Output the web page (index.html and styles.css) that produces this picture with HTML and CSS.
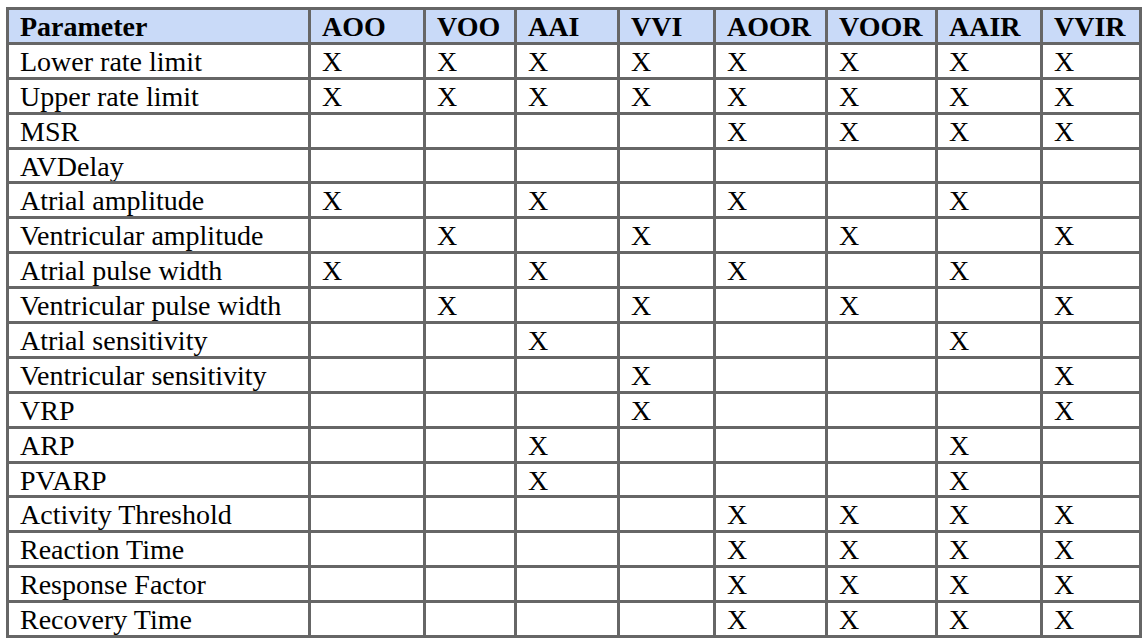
FILE: index.html
```html
<!DOCTYPE html>
<html>
<head>
<meta charset="utf-8">
<link rel="stylesheet" href="styles.css">
</head>
<body>
<table class="modes">
<colgroup>
<col class="c-param"><col class="c-aoo"><col class="c-voo"><col class="c-aai"><col class="c-vvi"><col class="c-aoor"><col class="c-voor"><col class="c-aair"><col class="c-vvir">
</colgroup>
<thead>
<tr><th>Parameter</th><th>AOO</th><th>VOO</th><th>AAI</th><th>VVI</th><th>AOOR</th><th>VOOR</th><th>AAIR</th><th>VVIR</th></tr>
</thead>
<tbody>
<tr><td>Lower rate limit</td><td>X</td><td>X</td><td>X</td><td>X</td><td>X</td><td>X</td><td>X</td><td>X</td></tr>
<tr><td>Upper rate limit</td><td>X</td><td>X</td><td>X</td><td>X</td><td>X</td><td>X</td><td>X</td><td>X</td></tr>
<tr><td>MSR</td><td></td><td></td><td></td><td></td><td>X</td><td>X</td><td>X</td><td>X</td></tr>
<tr><td>AVDelay</td><td></td><td></td><td></td><td></td><td></td><td></td><td></td><td></td></tr>
<tr><td>Atrial amplitude</td><td>X</td><td></td><td>X</td><td></td><td>X</td><td></td><td>X</td><td></td></tr>
<tr><td>Ventricular amplitude</td><td></td><td>X</td><td></td><td>X</td><td></td><td>X</td><td></td><td>X</td></tr>
<tr><td>Atrial pulse width</td><td>X</td><td></td><td>X</td><td></td><td>X</td><td></td><td>X</td><td></td></tr>
<tr><td>Ventricular pulse width</td><td></td><td>X</td><td></td><td>X</td><td></td><td>X</td><td></td><td>X</td></tr>
<tr><td>Atrial sensitivity</td><td></td><td></td><td>X</td><td></td><td></td><td></td><td>X</td><td></td></tr>
<tr><td>Ventricular sensitivity</td><td></td><td></td><td></td><td>X</td><td></td><td></td><td></td><td>X</td></tr>
<tr><td>VRP</td><td></td><td></td><td></td><td>X</td><td></td><td></td><td></td><td>X</td></tr>
<tr><td>ARP</td><td></td><td></td><td>X</td><td></td><td></td><td></td><td>X</td><td></td></tr>
<tr><td>PVARP</td><td></td><td></td><td>X</td><td></td><td></td><td></td><td>X</td><td></td></tr>
<tr><td>Activity Threshold</td><td></td><td></td><td></td><td></td><td>X</td><td>X</td><td>X</td><td>X</td></tr>
<tr><td>Reaction Time</td><td></td><td></td><td></td><td></td><td>X</td><td>X</td><td>X</td><td>X</td></tr>
<tr><td>Response Factor</td><td></td><td></td><td></td><td></td><td>X</td><td>X</td><td>X</td><td>X</td></tr>
<tr><td>Recovery Time</td><td></td><td></td><td></td><td></td><td>X</td><td>X</td><td>X</td><td>X</td></tr>
</tbody>
</table>
</body>
</html>
```

FILE: styles.css
```css
html, body {
  margin: 0;
  padding: 0;
  background: #ffffff;
}

body {
  padding: 7px 0 0 6px;
  font-family: "Liberation Serif", "Times New Roman", serif;
  color: #000000;
}

.modes {
  border-collapse: separate;
  border-spacing: 0;
  table-layout: fixed;
  box-sizing: border-box;
  width: 1136px;
  font-size: 28px;
  border-top: 3px solid #666666;
  border-left: 3px solid #666666;
}

.c-param { width: 302px; }
.c-aoo { width: 115px; }
.c-voo { width: 91px; }
.c-aai { width: 103px; }
.c-vvi { width: 96px; }
.c-aoor { width: 112px; }
.c-voor { width: 110px; }
.c-aair { width: 105px; }
.c-vvir { width: 99px; }

.modes th,
.modes td {
  border-right: 3px solid #666666;
  border-bottom: 3px solid #666666;
  padding: 3px 0 0 11px;
  line-height: 28px;
  text-align: left;
  vertical-align: top;
  white-space: nowrap;
  overflow: hidden;
}

.modes tr {
  height: 34.9px;
}

.modes th {
  background: #c9daf8;
  font-weight: bold;
}
```
